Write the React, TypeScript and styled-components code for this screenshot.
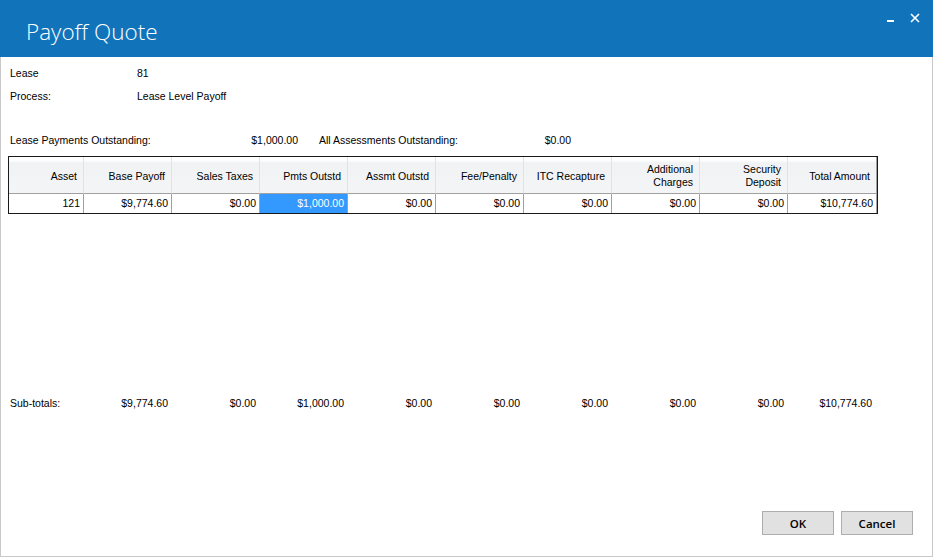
import React from "react";
import styled, { createGlobalStyle } from "styled-components";

const GlobalStyle = createGlobalStyle`
  html, body {
    margin: 0;
    padding: 0;
    background: #ffffff;
  }
  body {
    font-family: "Liberation Sans", Arial, sans-serif;
    font-size: 10.5px;
    color: #000;
  }
`;

const Window = styled.div`
  width: 933px;
  height: 557px;
  box-sizing: border-box;
  display: flex;
  flex-direction: column;
  background: #fff;
`;

const TitleBar = styled.header`
  height: 57px;
  flex: none;
  background: #1174bb;
  display: flex;
  align-items: flex-start;
  justify-content: space-between;
`;

const Title = styled.h1`
  margin: 0;
  padding: 18px 0 0 26px;
  font-family: "Open Sans", "Segoe UI", sans-serif;
  font-weight: 300;
  font-size: 22.5px;
  line-height: 28px;
  color: #fff;
`;

const Controls = styled.div`
  display: flex;
  align-items: flex-start;
  gap: 15px;
  padding: 11px 14px 0 0;
`;

const ControlButton = styled.button`
  border: none;
  background: transparent;
  padding: 0;
  width: 9px;
  height: 10px;
  display: block;
  cursor: pointer;
`;

const Body = styled.main`
  flex: 1;
  display: flex;
  flex-direction: column;
  border: 1px solid #c9c9c9;
  border-top: none;
  padding: 7px 0 0 0;
`;

const InfoRow = styled.div<{ $gap?: number }>`
  display: flex;
  height: 18px;
  line-height: 18px;
  padding-left: 9px;
  margin-top: ${(p) => p.$gap ?? 0}px;
`;

const Label = styled.span<{ $w: number }>`
  width: ${(p) => p.$w}px;
  flex: none;
`;

const Amount = styled.span<{ $w: number }>`
  width: ${(p) => p.$w}px;
  flex: none;
  text-align: right;
`;

const Grid = styled.div`
  margin: 7px 0 0 7px;
  width: 870px;
  box-sizing: border-box;
  border: 1px solid #1a1a1a;
`;

const GridRow = styled.div`
  display: grid;
  grid-template-columns: 75px repeat(8, 88px) 1fr;
`;

const HeadCell = styled.div<{ $last?: boolean }>`
  height: 37px;
  box-sizing: border-box;
  display: flex;
  align-items: center;
  justify-content: flex-end;
  text-align: right;
  padding: 2px 6px 0 2px;
  line-height: 13px;
  background: linear-gradient(#ffffff 0, #ffffff 3px, #f1f2f4 6px, #f4f5f7 100%);
  border-right: 1px solid ${(p) => (p.$last ? "#a0a0a0" : "#dfe2e6")};
  border-bottom: 1px solid #a0a0a0;
`;

const Cell = styled.div<{ $selected?: boolean }>`
  height: 19px;
  line-height: 18px;
  box-sizing: border-box;
  text-align: right;
  padding-right: 3px;
  border-right: 1px solid #a0a0a0;
  background: ${(p) => (p.$selected ? "#3399ff" : "#fff")};
  color: ${(p) => (p.$selected ? "#fff" : "#000")};
`;

const SubtotalRow = styled.div`
  display: grid;
  grid-template-columns: 75px repeat(9, 88px);
  margin: 180px 0 0 8px;
  height: 18px;
  line-height: 18px;
`;

const SubLabel = styled.div`
  padding-left: 1px;
  white-space: nowrap;
`;

const SubValue = styled.div`
  text-align: right;
  padding-right: 4px;
`;

const Footer = styled.div`
  margin-top: auto;
  display: flex;
  justify-content: flex-end;
  gap: 7px;
  padding: 0 19px 21px 0;
`;

const DialogButton = styled.button`
  width: 72px;
  height: 24px;
  box-sizing: border-box;
  border: 1px solid #adadad;
  background: #e1e1e1;
  font-family: "Open Sans", "Segoe UI", sans-serif;
  font-weight: 600;
  font-size: 11.5px;
  color: #000;
  padding: 0;
  cursor: pointer;
`;

const columns = [
  "Asset",
  "Base Payoff",
  "Sales Taxes",
  "Pmts Outstd",
  "Assmt Outstd",
  "Fee/Penalty",
  "ITC Recapture",
  "Additional\nCharges",
  "Security\nDeposit",
  "Total Amount",
];

const row = ["121", "$9,774.60", "$0.00", "$1,000.00", "$0.00", "$0.00", "$0.00", "$0.00", "$0.00", "$10,774.60"];

const subtotals = ["$9,774.60", "$0.00", "$1,000.00", "$0.00", "$0.00", "$0.00", "$0.00", "$0.00", "$10,774.60"];

const App = () => {
  return (
    <>
      <GlobalStyle />
      <Window>
        <TitleBar>
          <Title>Payoff Quote</Title>
          <Controls>
            <ControlButton aria-label="Minimize">
              <svg width="9" height="10" viewBox="0 0 9 10">
                <rect x="1" y="7" width="7" height="2" fill="#fff" />
              </svg>
            </ControlButton>
            <ControlButton aria-label="Close">
              <svg width="10" height="10" viewBox="0 0 10 10">
                <path d="M1 1 L9 9 M9 1 L1 9" stroke="#fff" strokeWidth="1.6" />
              </svg>
            </ControlButton>
          </Controls>
        </TitleBar>
        <Body>
          <InfoRow>
            <Label $w={127}>Lease</Label>
            <span>81</span>
          </InfoRow>
          <InfoRow $gap={5}>
            <Label $w={127}>Process:</Label>
            <span>Lease Level Payoff</span>
          </InfoRow>
          <InfoRow $gap={26}>
            <Label $w={200}>Lease Payments Outstanding:</Label>
            <Amount $w={88}>$1,000.00</Amount>
            <Label $w={21} />
            <Label $w={200}>All Assessments Outstanding:</Label>
            <Amount $w={52}>$0.00</Amount>
          </InfoRow>
          <Grid>
            <GridRow>
              {columns.map((c, idx) => (
                <HeadCell key={c} $last={idx === columns.length - 1}>
                  <span>
                    {c.split("\n").map((line, i) => (
                      <React.Fragment key={i}>
                        {i > 0 && <br />}
                        {line}
                      </React.Fragment>
                    ))}
                  </span>
                </HeadCell>
              ))}
            </GridRow>
            <GridRow>
              {row.map((v, i) => (
                <Cell key={i} $selected={i === 3}>
                  {v}
                </Cell>
              ))}
            </GridRow>
          </Grid>
          <SubtotalRow>
            <SubLabel>Sub-totals:</SubLabel>
            {subtotals.map((v, i) => (
              <SubValue key={i}>{v}</SubValue>
            ))}
          </SubtotalRow>
          <Footer>
            <DialogButton>OK</DialogButton>
            <DialogButton>Cancel</DialogButton>
          </Footer>
        </Body>
      </Window>
    </>
  );
};

export default App;
